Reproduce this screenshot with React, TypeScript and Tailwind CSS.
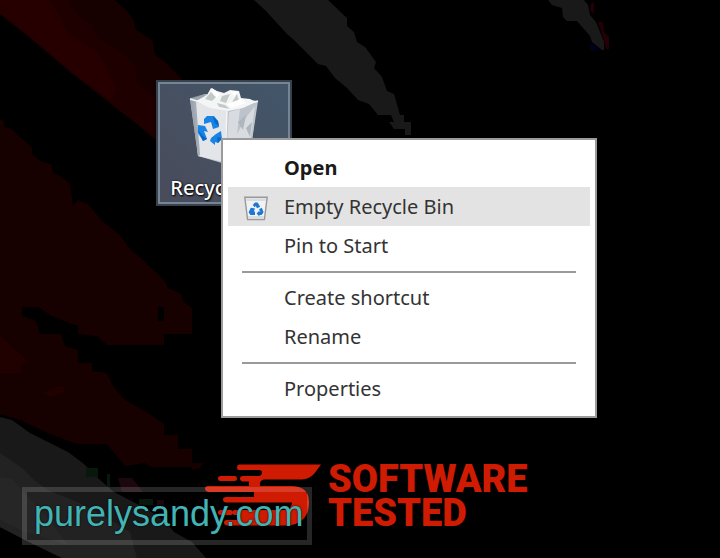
import { Fragment } from 'react'

type MenuItem = {
  label: string
  bold?: boolean
  active?: boolean
}

const groups: MenuItem[][] = [
  [
    { label: 'Open', bold: true },
    { label: 'Empty Recycle Bin', active: true },
    { label: 'Pin to Start' },
  ],
  [{ label: 'Create shortcut' }, { label: 'Rename' }],
  [{ label: 'Properties' }],
]

function Wallpaper() {
  return (
    <svg
      className="absolute inset-0 h-full w-full"
      viewBox="0 0 720 558"
      preserveAspectRatio="xMinYMin slice"
      aria-hidden="true"
    >
      <path fill="#170000" d="M0 0H115L127 11L134 21L136 30L153 41L155 55L165 62L183 80V140H155L137 124L110 103L98 92L70 72L50 55L35 42L0 14Z" />
      <path fill="#1e0000" d="M0 0H70L77 15L91 23L97 38L122 52L135 66L137 80L155 98V137L137 124L110 103L70 72L35 42L0 14Z" />
      <path fill="#260000" d="M0 0H48L60 16L68 34L96 51L106 67L116 90L110 100L70 70L35 40L0 13Z" />
      <path
        fill="#170000"
        d="M0 119L4 121V127L10 128L21 138L32 147V154L40 161L51 164L53 173L60 176L70 184L73 206L78 200L88 204L102 221L120 235L129 248L145 262L165 281L168 288L181 294L184 302L192 308V334H164V345H107L97 336L78 334V326L64 321L50 315L38 307H22V316L36 321L40 334H61L65 346L78 350V363H92V371L107 373L113 386L125 400L148 413L164 424V435H178V449H192V463H203L200 468L192 470V467H150L145 463L125 466L107 444H77L50 434L20 420L0 414Z"
      />
      <path fill="#000" d="M158 307H164V321H158Z" />
      <path fill="#210000" d="M0 335L14 349L28 361L21 366V373H0ZM43 393L56 387H64V392L50 397Z" />
      <path fill="#191919" d="M0 417L12 420L30 433L50 443L68 452L84 464L100 480L114 492L145 508L165 521L174 532L192 542L206 558H62L25 540L0 527Z" />
      <path fill="#222" d="M0 453L22 468L35 481L50 491L80 503L107 518L130 532L137 558H62L25 540L0 527Z" />
      <path fill="#292929" d="M0 477L12 479L22 491L45 515L68 545L25 532L0 520Z" opacity=".6" />
      <path fill="#08180c" d="M86 468H98V477H86ZM107 474H110V487H107ZM139 499H153V505H139Z" />
      <path fill="#1b070e" d="M118 478H132L143 492H122ZM157 500H164V505H157Z" />
      <path
        fill="#191919"
        d="M254 0L266 11L276 22L287 34L294 40L304 50L318 64L326 66L335 78L347 88L358 100L369 104L378 115H391L394 122H389L394 129H405V135H411V122H404V115H400L394 94L387 91L382 77L374 68L376 62L365 47L357 42L354 32L347 26V18L328 0Z"
      />
      <path fill="#191919" d="M548 0L552 5L562 8L563 17L567 21H577L590 36L592 42L602 50H604V42L596 22L590 15L588 5L584 0Z" />
      <path fill="#220006" d="M591 3L594 2V14L590 10ZM598 22H603L604 32L609 37V49H606L604 40Z" />
      <path fill="#00001f" d="M590 43L600 49L594 51L590 49Z" />
    </svg>
  )
}

function BinIcon() {
  return (
    <svg className="h-[84px] w-[76px]" viewBox="186 84 76 84" aria-hidden="true">
      <path fill="#c3c8ce" d="M190 99L205 94L258 101L250 154L222 163L198 156Z" />
      <path fill="#e3e5e8" d="M193 101L227 111L224 162L198 156Z" />
      <path fill="#bcc3ca" d="M227 111L257 102L250 154L224 162Z" />
      <path fill="#d8dce0" d="M229 112L240 109L237 134L247 116L255 106L249 150L226 160Z" />
      <path fill="#aeb6be" d="M238 122L246 115L243 130ZM246 128L252 122L250 137Z" />
      <path fill="#8d98a4" d="M190 98L198 156L200 155L196 102L206 98L205 94Z" opacity=".75" />
      <path fill="#f4f5f5" d="M196 101L207 95L211 88L217 91L224 93L230 90L239 91L241 98L250 99L256 102L243 108L228 111L210 108Z" />
      <path fill="#c2cac9" d="M211 92L216 97L212 101L205 99ZM222 96L230 94L226 103L220 101ZM237 94L239 101L231 104ZM217 103L225 105L230 109L219 107Z" />
      <path fill="#fff" d="M212 88L220 94L217 98L213 94ZM230 91L238 92L234 96ZM227 104L241 99L246 103L232 108Z" />
      <path fill="none" stroke="#f4f6f7" strokeWidth="1.5" d="M190 99L227 110L258 101M227 111L225 161" />
      <path fill="#1683e5" d="M204 119L207 116H214L218 121L219 127L213 129L211 122L204 124Z" />
      <path fill="#1683e5" d="M198 125L205 126L208 132L204 131L207 139L203 141L198 133Z" />
      <path fill="#1683e5" d="M211 138L216 134L221 131L222 139L218 143L215 142V145L210 141Z" />
      <path fill="#0866c8" d="M213 117L218 121L219 126L215 123ZM198 130L203 136L207 139L203 141ZM217 137L222 138L218 143Z" />
    </svg>
  )
}

function SmallBinIcon() {
  return (
    <svg className="h-7 w-7" viewBox="0 0 28 28" aria-hidden="true">
      <path fill="#f1f2f3" stroke="#999" strokeWidth="1.4" d="M2.8 4.200H25.200L22.400 26.500H5.600Z" />
      <path fill="#dadde0" d="M4 5.200H24L23.600 8H4.400ZM6 23H22L21.700 25.700H6.300Z" />
      <path fill="#1c78d6" d="M10.800 12L13 9.500H15.600L18.200 13.800L15 15.200L13.800 13L12.600 14.200Z" />
      <path fill="#1c78d6" d="M8.800 14.800L13 15.400L11.800 18.600H13V22H8.400L6.600 19.200Z" />
      <path fill="#1c78d6" d="M17 16.200L19.800 14.800L21.600 19.200L19.600 22H17.400V23.400L14.600 20.400L17.400 17.400V18.800H18.400Z" />
    </svg>
  )
}

function DesktopIcon() {
  return (
    <button
      type="button"
      className="absolute top-20 left-[156px] flex h-[126px] w-[136px] flex-col items-center border-2 border-[#35414e] bg-linear-to-tr from-[#494b5a] to-[#42566a] text-white"
    >
      <span className="absolute inset-0 border-2 border-[#778491]" />
      <span className="mt-[2px]">
        <BinIcon />
      </span>
      <span className="mt-2 text-[20px] leading-6 font-medium whitespace-nowrap [text-shadow:1px_1px_2px_#000,0_0_2px_#000]">
        Recycle Bin
      </span>
    </button>
  )
}

function ContextMenu() {
  return (
    <div
      role="menu"
      aria-label="Recycle Bin"
      className="absolute top-[138px] left-[221px] w-[376px] border-2 border-[#9b9b9b] bg-white px-[5px] py-2 text-[#333]"
    >
      {groups.map((items, i) => (
        <Fragment key={i}>
          {i > 0 && <hr className="mx-3.5 mt-[6px] mb-[5px] border-t-2 border-[#9a9a9a]" />}
          {items.map((item) => (
            <button
              key={item.label}
              type="button"
              role="menuitem"
              className={`flex h-[39px] w-full items-center text-left text-[20px] leading-6 ${
                item.active ? 'bg-[#e3e3e3]' : ''
              } ${item.bold ? 'font-bold text-[#1a1a1a]' : ''}`}
            >
              <span className="flex w-14 shrink-0 justify-center">
                {item.active && <SmallBinIcon />}
              </span>
              {item.label}
            </button>
          ))}
        </Fragment>
      ))}
    </div>
  )
}

function Brand() {
  return (
    <div className="absolute top-[462px] left-[204px] flex gap-[6px] text-[#cf1b02]">
      <svg className="h-[66px] w-[118px]" viewBox="204 462 118 66" fill="currentColor" aria-hidden="true">
        <path d="M239 464.500H321L314 474Q309 479 302 479.500H264Q260 480 260 484V486H293Q309 487 309 502Q309 524 287 525.500H227Q224 525 224 522.500Q224 520 227 520H237V515H234Q231 512.500 234 510H284Q292 509 292 502.500H226Q223 502 223 499.500Q223 497 226 497H254V492H208Q205 491 205 489Q205 486 208 486H249V481.500H243Q240 481 240 478.500Q240 476 243 476H259Q262 475 262 472.500Q262 470 259 470H239Q237 470 237 467.500Q237 465 239 464.500Z" />
        <rect x="218" y="476" width="19" height="5" rx="2.500" />
        <rect x="218" y="510" width="15" height="5" rx="2.500" />
      </svg>
      <p className="flex flex-col font-[Roboto,sans-serif] text-[38px] leading-[34px] font-black">
        <span>SOFTWARE</span>
        <span>TESTED</span>
      </p>
    </div>
  )
}

function Watermark() {
  return (
    <div className="absolute top-[487px] left-[22px] h-[58px] w-[290px] border-[5px] border-white/15 py-1 pl-[7px] font-['Liberation_Sans',sans-serif] text-[36px] leading-9 text-[#42b4b5] [text-shadow:0_0_2px_#000]">
      purelysandy.com
    </div>
  )
}

export default function App() {
  return (
    <main className="relative min-h-screen overflow-hidden bg-black font-['Noto_Sans',sans-serif]">
      <Wallpaper />
      <DesktopIcon />
      <ContextMenu />
      <Brand />
      <Watermark />
    </main>
  )
}
